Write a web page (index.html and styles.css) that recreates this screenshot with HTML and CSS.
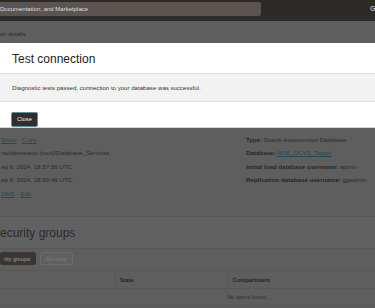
FILE: index.html
```html
<!DOCTYPE html>
<html lang="en">
<head>
  <meta charset="UTF-8" />
  <meta name="viewport" content="width=device-width, initial-scale=1.0"/>
  <title>Connection details</title>
  <link rel="stylesheet" href="styles.css">
</head>
<body>
  <div class="topbar">
    <div class="search">Documentation, and Marketplace</div>
    <span class="user">G</span>
  </div>
  <div class="crumbs">on details</div>

  <!-- Test connection dialog -->
  <div class="dialog">
    <div class="dialog-head">
      <h3>Test connection</h3>
    </div>
    <div class="dialog-body">
      <p>Diagnostic tests passed, connection to your database was successful.</p>
    </div>
    <div class="dialog-foot">
      <button class="btn-close">Close</button>
    </div>
  </div>

  <div class="page">
    <div class="details">
      <div class="col col-left">
        <p><a href="#">Show</a> <a href="#">Copy</a></p>
        <p>racldemeaoci (root)/Database_Services</p>
        <p>ep 9, 2024, 18:57:59 UTC</p>
        <p>ep 9, 2024, 18:59:49 UTC</p>
        <p><a href="#">DMS</a> <a href="#">Edit</a></p>
      </div>
      <div class="col col-right">
        <p><b>Type:</b> Oracle Autonomous Database</p>
        <p><b>Database:</b> <a href="#">ADB_OCVS_Target</a></p>
        <p><b>Initial load database username:</b> admin</p>
        <p><b>Replication database username:</b> ggadmin</p>
      </div>
    </div>

    <div class="panel">
      <div class="panel-head">
        <h2>ecurity groups</h2>
      </div>
      <div class="actions">
        <button class="btn-dark">rity groups</button>
        <button class="btn-ghost">Remove</button>
      </div>
      <table>
        <thead>
          <tr>
            <th class="c-name"></th>
            <th class="c-state">State</th>
            <th class="c-comp">Compartment</th>
          </tr>
        </thead>
        <tbody>
          <tr>
            <td colspan="3" class="empty">No items found.</td>
          </tr>
        </tbody>
      </table>
    </div>
  </div>
</body>
</html>
```

FILE: styles.css
```css
* {
  margin: 0;
  padding: 0;
  box-sizing: border-box;
  font-family: 'Liberation Sans', Arial, sans-serif;
}

body {
  background: #5e5e5e;
  width: 375px;
  height: 308px;
  overflow: hidden;
}

/* Top bar */
.topbar {
  height: 21px;
  background: #2e2a27;
  display: flex;
  align-items: flex-start;
  justify-content: space-between;
  padding-top: 2px;
}

.search {
  width: 261px;
  height: 14px;
  background: #5a5551;
  border-radius: 0 2px 2px 0;
  color: #dedede;
  font-size: 6px;
  line-height: 14px;
}

.user {
  color: #b8b8b8;
  font-size: 7px;
  font-weight: bold;
  margin-top: 3px;
  width: 5px;
  overflow: hidden;
}

.crumbs {
  height: 22px;
  background: #5f5f5f;
  color: #2a2a2a;
  font-size: 6px;
  padding-top: 10px;
}

/* Dialog */
.dialog {
  background: #fff;
  border-bottom: 1px solid #d6d6d6;
}

.dialog-head {
  height: 31px;
  padding: 0 12px;
  display: flex;
  align-items: center;
  border-bottom: 1px solid #dcdcdc;
}

.dialog-head h3 {
  font-size: 12px;
  font-weight: normal;
  color: #222;
  padding-top: 1px;
}

.dialog-body {
  height: 28px;
  background: #f2f2f2;
  border-bottom: 1px solid #dedede;
  padding: 0 12px;
  display: flex;
  align-items: center;
}

.dialog-body p {
  font-size: 6.1px;
  color: #333;
}

.dialog-foot {
  height: 25px;
  padding: 5px 11px 0;
}

.btn-close {
  width: 27px;
  height: 15px;
  background: #2f2f2f;
  color: #f2f2f2;
  font-size: 5.8px;
  border: 1px solid #5d8f98;
  border-radius: 2px;
}

/* Page behind the dialog */
.details {
  display: flex;
  height: 89px;
  padding-top: 5px;
  border-bottom: 1px solid #585858;
}

.col p {
  font-size: 6.2px;
  line-height: 13.4px;
  color: #2b2b2b;
  white-space: nowrap;
}

.col a {
  color: #1f4a56;
  margin-right: 4px;
}

.col-left {
  width: 246px;
  padding-left: 1px;
}

.col-right b {
  color: #262626;
}

.panel-head {
  height: 32px;
  background: #616161;
  border-bottom: 1px solid #585858;
  display: flex;
  align-items: center;
}

.panel-head h2 {
  font-size: 12px;
  font-weight: normal;
  color: #2a2a2a;
  padding-top: 1px;
}

.actions {
  display: flex;
  gap: 4px;
  padding-top: 3px;
  height: 21px;
}

.actions button {
  height: 13px;
  font-size: 5.6px;
  border-radius: 2px;
  white-space: nowrap;
  overflow: hidden;
  display: flex;
  align-items: center;
}

.btn-dark {
  width: 36px;
  background: #3b3633;
  color: #a0a0a0;
  border: 1px solid #3b3633;
  justify-content: flex-end;
  padding-right: 5px;
}

.btn-ghost {
  width: 33px;
  background: #606060;
  color: #7c7c7c;
  border: 1px solid #6c6c6c;
  justify-content: center;
}

table {
  width: 100%;
  border-collapse: collapse;
}

th, td {
  font-size: 5.8px;
  text-align: left;
  color: #262626;
  border-top: 1px solid #575757;
  border-bottom: 1px solid #575757;
}

th {
  height: 18px;
  font-weight: bold;
  padding-left: 4px;
  border-left: 1px solid #575757;
}

th.c-name {
  width: 115px;
  border-left: none;
}

th.c-state {
  width: 113px;
}

td.empty {
  height: 17px;
  text-align: center;
  color: #2e2e2e;
  padding-left: 120px;
}
```
